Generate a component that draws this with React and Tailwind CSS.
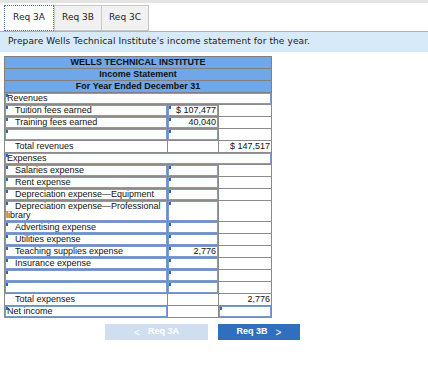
import React from "react";

const rows = [
  { type: "section", label: "Revenues" },
  { type: "item", label: "Tuition fees earned", mid: "$ 107,477" },
  { type: "item", label: "Training fees earned", mid: "40,040" },
  { type: "item", label: "" },
  { type: "total", label: "Total revenues", right: "$ 147,517" },
  { type: "section", label: "Expenses" },
  { type: "item", label: "Salaries expense" },
  { type: "item", label: "Rent expense" },
  { type: "item", label: "Depreciation expense\u2014Equipment" },
  { type: "item", label: "Depreciation expense\u2014Professional library", tall: true },
  { type: "item", label: "Advertising expense" },
  { type: "item", label: "Utilities expense" },
  { type: "item", label: "Teaching supplies expense", mid: "2,776" },
  { type: "item", label: "Insurance expense" },
  { type: "item", label: "" },
  { type: "item", label: "" },
  { type: "total", label: "Total expenses", right: "2,776" },
  { type: "net", label: "Net income" },
];

function Box({ children, h, className = "" }) {
  return (
    <div className={"relative box-border overflow-hidden border border-[#7b9bd0] " + h + " " + className}>
      <span className="absolute left-0 top-0 h-[3px] w-[2px] bg-[#2d66c8]"></span>
      {children}
    </div>
  );
}

const cell = "border border-[#8a8a8a] p-0 align-top";

function Row({ row }) {
  const h = row.tall ? "h-[20px]" : "h-[11px]";

  if (row.type === "section") {
    return (
      <tr>
        <td colSpan={3} className={cell}>
          <Box h={h} className="pl-[1px]">{row.label}</Box>
        </td>
      </tr>
    );
  }

  if (row.type === "total") {
    return (
      <tr>
        <td className={cell}>
          <div className={h + " pl-[10px] pt-[1px]"}>{row.label}</div>
        </td>
        <td className="border border-[#8a8a8a] border-t-black p-0"></td>
        <td className={cell}>
          <div className={h + " pr-[1px] pt-[1px] text-right"}>{row.right}</div>
        </td>
      </tr>
    );
  }

  if (row.type === "net") {
    return (
      <tr>
        <td className={cell}>
          <Box h={h} className="pl-[1px]">{row.label}</Box>
        </td>
        <td className={cell}></td>
        <td className={cell}>
          <Box h={h} className="border-[#5a7fbf]"></Box>
        </td>
      </tr>
    );
  }

  return (
    <tr>
      <td className={cell}>
        <Box h={h} className="indent-[9px]">{row.label}</Box>
      </td>
      <td className={cell}>
        <Box h={h} className="pr-[1px] text-right">{row.mid}</Box>
      </td>
      <td className={cell}></td>
    </tr>
  );
}

export default function App() {
  return (
    <div className="h-[386px] w-[428px] bg-white">

      <div className="h-[3px] bg-[#e4e4e4]"></div>

      {/* TABS */}
      <div className="mt-[2px] flex pl-[4px] font-['DejaVu_Sans',sans-serif] text-[9px] text-[#222]">
        <div className="flex h-[26px] w-[50px] items-center justify-center border border-dotted border-[#4a6fa8] bg-white">
          Req 3A
        </div>
        <div className="flex h-[26px] w-[48px] items-center justify-center border border-[#c8c8c8] bg-[#f1f1f1]">
          Req 3B
        </div>
        <div className="flex h-[26px] w-[47px] items-center justify-center border border-l-0 border-[#c8c8c8] bg-[#f1f1f1]">
          Req 3C
        </div>
      </div>

      <div className="flex h-[21px] items-center border-t border-[#a9b4bf] bg-[#d7eaf9] pl-[8px] font-['DejaVu_Sans',sans-serif] text-[9px] tracking-[0.1px] text-[#1a1a1a]">
        Prepare Wells Technical Institute's income statement for the year.
      </div>

      {/* STATEMENT */}
      <div className="ml-[4px] mt-[4px] w-[267px] font-['Liberation_Sans',Arial,sans-serif] text-[9px] leading-[9px] text-[#111]">
        <table className="w-full table-fixed border-collapse">
          <colgroup>
            <col className="w-[163px]" />
            <col className="w-[51px]" />
            <col className="w-[53px]" />
          </colgroup>
          <thead>
            <tr>
              <th colSpan={3} className="border border-[#808080] bg-[#6fa7e8] p-0 font-bold">
                <div className="h-[11px] pt-[1px]">WELLS TECHNICAL INSTITUTE</div>
              </th>
            </tr>
            <tr>
              <th colSpan={3} className="border border-[#808080] bg-[#6fa7e8] p-0 font-bold">
                <div className="h-[11px] pt-[1px]">Income Statement</div>
              </th>
            </tr>
            <tr>
              <th colSpan={3} className="border border-[#808080] bg-[#6fa7e8] p-0 font-bold">
                <div className="h-[11px] pt-[1px]">For Year Ended December 31</div>
              </th>
            </tr>
          </thead>
          <tbody>
            {rows.map((row, i) => (
              <Row key={i} row={row} />
            ))}
          </tbody>
        </table>
      </div>

      {/* NAV BUTTONS */}
      <div className="mt-[6px] flex pl-[105px] font-['Liberation_Sans',Arial,sans-serif] text-[9px] font-bold text-white">
        <div className="flex h-[16px] w-[103px] items-center justify-center gap-[8px] bg-[#cfdff0]">
          <span className="text-[10px] font-normal">&lt;</span>
          <span>Req 3A</span>
        </div>
        <div className="ml-[10px] flex h-[16px] w-[82px] items-center justify-center gap-[8px] bg-[#2f6fbe]">
          <span>Req 3B</span>
          <span className="text-[10px] font-normal">&gt;</span>
        </div>
      </div>
    </div>
  );
}
